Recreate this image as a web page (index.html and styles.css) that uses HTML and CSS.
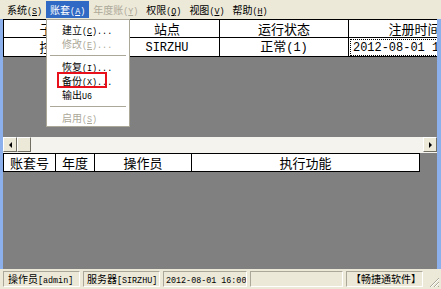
FILE: index.html
```html
<!DOCTYPE html>
<html lang="zh-CN">
<head>
    <meta charset="UTF-8">
    <title>系统管理</title>
    <link rel="stylesheet" href="styles.css">
</head>
<body>
<div class="window">
    <div class="menubar">
        <span class="menu">系统<span class="en">(<u>S</u>)</span></span>
        <span class="menu open">账套<span class="en">(<u>A</u>)</span></span>
        <span class="menu disabled">年度账<span class="en">(<u>Y</u>)</span></span>
        <span class="menu">权限<span class="en">(<u>Q</u>)</span></span>
        <span class="menu">视图<span class="en">(<u>V</u>)</span></span>
        <span class="menu">帮助<span class="en">(<u>H</u>)</span></span>
    </div>

    <div class="client">
        <div class="pane pane-top">
            <table class="grid grid-top">
                <colgroup>
                    <col style="width:111px"><col style="width:105px"><col style="width:129px"><col style="width:132px">
                </colgroup>
                <tr><th>子系统</th><th>站点</th><th>运行状态</th><th>注册时间</th></tr>
                <tr>
                    <td>控制台</td>
                    <td><span class="en">SIRZHU</span></td>
                    <td>正常<span class="en">(1)</span></td>
                    <td class="focus"><span class="en">2012-08-01 14:52</span></td>
                </tr>
            </table>
        </div>

        <div class="hscroll">
            <span class="sbtn"><i class="arrow-left"></i></span>
            <span class="sbtn"></span>
            <span class="track"></span>
            <span class="sbtn"><i class="arrow-right"></i></span>
        </div>

        <div class="pane pane-bottom">
            <table class="grid grid-bottom">
                <colgroup>
                    <col style="width:52px"><col style="width:39px"><col style="width:97px"><col style="width:228px">
                </colgroup>
                <tr><th>账套号</th><th>年度</th><th>操作员</th><th>执行功能</th></tr>
            </table>
        </div>
    </div>

    <div class="statusbar">
        <span class="panel p1">操作员<span class="en">[admin]</span></span>
        <span class="panel p2">服务器<span class="en">[SIRZHU]</span></span>
        <span class="panel p3"><span class="en">2012-08-01 16:00</span></span>
        <span class="panel p4"></span>
        <span class="panel p5">【畅捷通软件】</span>
        <svg class="grip" width="11" height="11" viewBox="0 0 11 11">
            <path d="M10 1 L1 10 M10 5 L5 10 M10 9 L9 10" stroke="#aca899" stroke-width="1"/>
            <path d="M10 2 L2 10 M10 6 L6 10" stroke="#fff" stroke-width="1"/>
        </svg>
    </div>

    <!-- open 账套 menu -->
    <div class="dropdown">
        <div class="item">建立<span class="en">(<u>C</u>)...</span></div>
        <div class="item disabled">修改<span class="en">(<u>E</u>)...</span></div>
        <div class="sep"></div>
        <div class="item">恢复<span class="en">(<u>I</u>)...</span></div>
        <div class="item">备份<span class="en">(<u>X</u>)...</span></div>
        <div class="item">输出<span class="en">U6</span></div>
        <div class="sep"></div>
        <div class="item disabled">启用<span class="en">(<u>S</u>)</span></div>
        <div class="mark"></div>
    </div>
</div>
</body>
</html>
```

FILE: styles.css
```css
* {
    box-sizing: border-box;
}
body {
    margin: 0;
    font-family: "Noto Sans CJK SC", "Noto Sans", sans-serif;
    font-size: 10px;
    color: #000;
    background: #808080;
}
.window {
    position: relative;
    width: 441px;
    height: 289px;
    display: flex;
    flex-direction: column;
    overflow: hidden;
}
.en {
    font-family: "Liberation Mono", monospace;
    font-size: 0.84em;
}
u {
    text-decoration: underline;
}

/* menu bar */
.menubar {
    height: 19px;
    background: #ece9d8;
    display: flex;
    align-items: center;
    padding-left: 3px;
    flex-shrink: 0;
}
.menu {
    height: 17px;
    line-height: 17px;
    padding: 0 4px;
    white-space: nowrap;
}
.menu.open {
    background: #316ac5;
    color: #fff;
}
.menu.disabled {
    color: #aca899;
}

/* client area */
.client {
    flex: 1;
    min-height: 0;
    display: flex;
    flex-direction: column;
    background: #808080;
    border-left: 3px solid #8cb0ec;
    border-right: 4px solid #8cb0ec;
}
.pane {
    overflow: hidden;
}
.pane-top {
    height: 118px;
    flex-shrink: 0;
}
.pane-bottom {
    flex: 1;
}
.grid {
    border-collapse: collapse;
    table-layout: fixed;
    background: #fff;
    font-size: 13px;
}
.grid .en {
    font-size: 0.92em;
}
.grid-top {
    width: 477px;
}
.grid-bottom {
    width: 416px;
}
.grid tr {
    height: 18px;
}
.grid th, .grid td {
    border: 1px solid #000;
    padding: 0 2px;
    font-weight: normal;
    text-align: center;
    white-space: nowrap;
    overflow: hidden;
    line-height: 16px;
}
.grid td.focus {
    text-align: left;
    padding-left: 4px;
    outline: 1px dotted #000;
    outline-offset: -2px;
}

/* horizontal scroll bar */
.hscroll {
    height: 16px;
    flex-shrink: 0;
    display: flex;
    background: #f4f3ee;
    padding-bottom: 1px;
}
.hscroll .track {
    flex: 1;
}
.sbtn {
    width: 14px;
    height: 15px;
    background: #ece9d8;
    border: 1px solid;
    border-color: #fff #716f64 #716f64 #fff;
    display: flex;
    align-items: center;
    justify-content: center;
}
.arrow-left {
    border-top: 3px solid transparent;
    border-bottom: 3px solid transparent;
    border-right: 3px solid #000;
}
.arrow-right {
    border-top: 3px solid transparent;
    border-bottom: 3px solid transparent;
    border-left: 3px solid #000;
}

/* status bar */
.statusbar {
    height: 20px;
    flex-shrink: 0;
    background: #ece9d8;
    display: flex;
    align-items: center;
    gap: 3px;
    padding-left: 3px;
}
.panel {
    height: 16px;
    line-height: 14px;
    padding: 0 4px;
    border: 1px solid;
    border-color: #aca899 #fff #fff #aca899;
    white-space: nowrap;
    overflow: hidden;
}
.p1 { width: 77px; }
.p2 { width: 77px; padding: 0 3px; }
.p3 { width: 84px; padding: 0 2px; }
.p4 { width: 93px; }
.p5 { width: 77px; text-align: center; }
.grip {
    margin-left: 3px;
    align-self: flex-end;
    margin-bottom: 1px;
}

/* dropdown */
.dropdown {
    position: absolute;
    left: 46px;
    top: 19px;
    width: 84px;
    height: 108px;
    background: #fff;
    border: 1px solid #aca899;
    padding: 3px 1px 2px;
}
.dropdown .item {
    height: 14px;
    line-height: 14px;
    padding-left: 14px;
    white-space: nowrap;
}
.dropdown .item.disabled {
    color: #aca899;
}
.dropdown .sep {
    height: 9px;
    margin: 0 2px;
    display: flex;
    align-items: center;
}
.dropdown .sep::before {
    content: "";
    flex: 1;
    border-top: 1px solid #aca899;
}
.mark {
    position: absolute;
    left: 10px;
    top: 52px;
    width: 50px;
    height: 16px;
    border: 2px solid #e8101a;
}
```
